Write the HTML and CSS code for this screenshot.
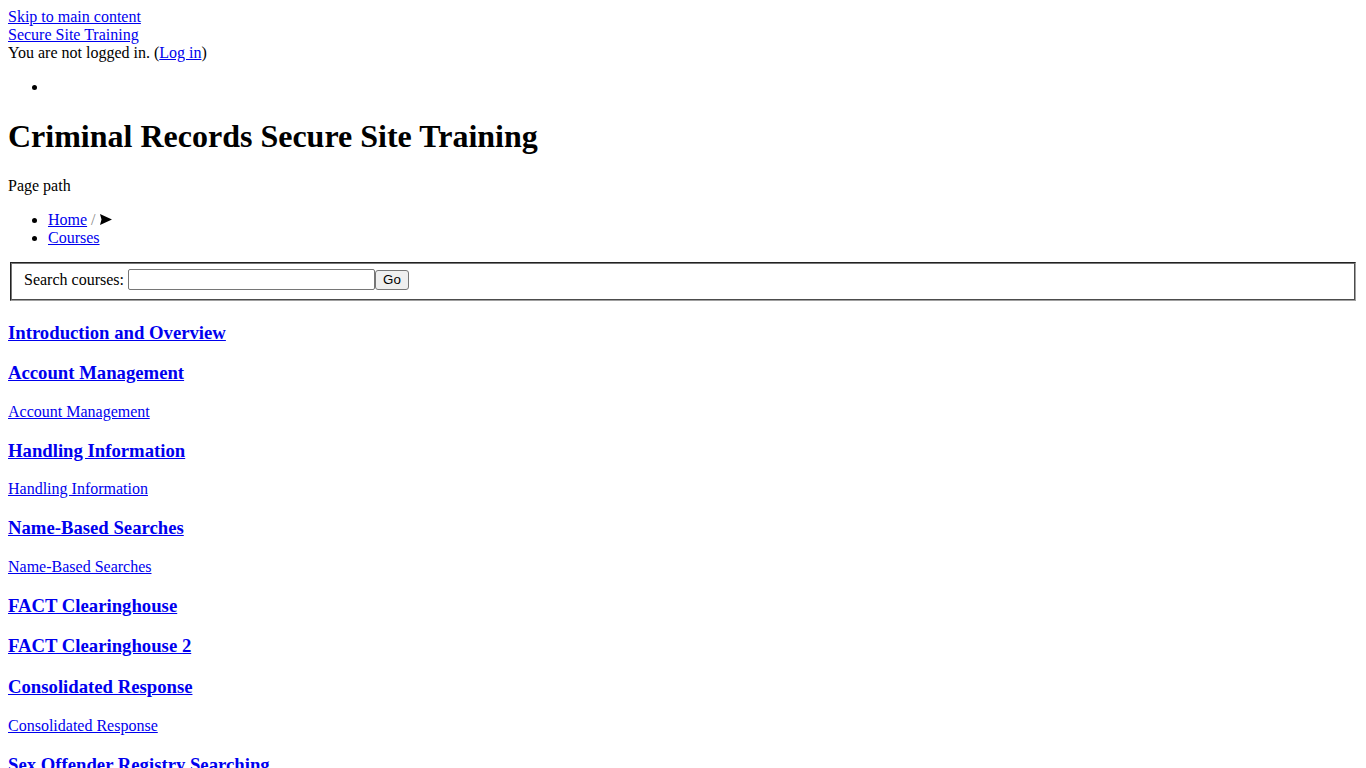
FILE: index.html
```html
<!DOCTYPE html>
<html lang="en">
<head>
<meta charset="utf-8">
<title>Courses</title>
<link rel="stylesheet" href="styles.css">
</head>
<body class="page">
<div class="topbar">
  <a class="link" href="#main">Skip to main content</a><br>
  <a class="link" href="#">Secure Site Training</a><br>
  <span class="login">You are not logged in. (<a class="link" href="#">Log in</a>)</span>
</div>
<ul class="navlist"><li></li></ul>
<h1 class="title">Criminal Records Secure Site Training</h1>
<p class="path">Page path</p>
<ul class="crumbs">
  <li><a class="link" href="#">Home</a> <span class="sep">/</span> <svg class="arrow" width="12" height="11" viewBox="0 0 12 11" aria-hidden="true"><polygon points="0,0 12,5.5 0,11 1.5,5.5" fill="#000"/></svg></li>
  <li><a class="link" href="#">Courses</a></li>
</ul>
<form class="search">
  <fieldset class="searchbox">
    <label class="searchlabel" for="q">Search courses: </label><input id="q" class="searchinput" type="text"><button class="searchbtn" type="button">Go</button>
  </fieldset>
</form>
<div id="main" class="courses">
  <h3 class="course"><a class="link" href="#">Introduction and Overview</a></h3>
  <h3 class="course"><a class="link" href="#">Account Management</a></h3>
  <p class="desc"><a class="link" href="#">Account Management</a></p>
  <h3 class="course"><a class="link" href="#">Handling Information</a></h3>
  <p class="desc"><a class="link" href="#">Handling Information</a></p>
  <h3 class="course"><a class="link" href="#">Name-Based Searches</a></h3>
  <p class="desc"><a class="link" href="#">Name-Based Searches</a></p>
  <h3 class="course"><a class="link" href="#">FACT Clearinghouse</a></h3>
  <h3 class="course"><a class="link" href="#">FACT Clearinghouse 2</a></h3>
  <h3 class="course"><a class="link" href="#">Consolidated Response</a></h3>
  <p class="desc"><a class="link" href="#">Consolidated Response</a></p>
  <h3 class="course"><a class="link" href="#">Sex Offender Registry Searching</a></h3>
  <p class="desc"><a class="link" href="#">Sex Offender Registry Searching</a></p>
</div>
</body>
</html>
```

FILE: styles.css
```css
html { background: #fff; }
.page {
  margin: 8px;
  font-family: "Liberation Serif", "Times New Roman", serif;
  font-size: 16px;
  color: #000;
}
.link { color: #0000ee; text-decoration: underline; }
.topbar { line-height: 18px; }
.navlist { margin: 16px 0; padding-left: 40px; line-height: 18px; }
.title {
  font-size: 32px;
  font-weight: bold;
  margin: 21.44px 0;
  line-height: 38px;
}
.path { margin: 16px 0; line-height: 18px; }
.crumbs { margin: 16px 0 15.5px; padding-left: 40px; line-height: 18px; }
.sep { color: #888; }
.arrow { display: inline-block; vertical-align: 0; }
.search { margin: 0; padding-bottom: 2px; }
.searchbox {
  margin: 0 2px;
  padding: 5px 12px 8.5px;
  border: 2px groove #c0c0c0;
  border-color: #767676 #a0a0a0 #a0a0a0 #767676;
  height: 21px;
  display: flex;
  align-items: center;
}
.searchlabel { line-height: 18px; margin-right: 4px; }
.searchinput {
  width: 247px;
  height: 21px;
  box-sizing: border-box;
  border: 1px solid #767676;
  border-radius: 2px;
  padding: 1px 2px;
  font-family: "Liberation Sans", Arial, sans-serif;
  font-size: 13.33px;
  margin: 0;
}
.searchbtn {
  width: 34px;
  height: 20px;
  box-sizing: border-box;
  border: 1px solid #767676;
  border-radius: 3px;
  background: #efefef;
  font-family: "Liberation Sans", Arial, sans-serif;
  font-size: 13.33px;
  color: #000;
  padding: 0;
  margin: 0;
}
.course {
  font-size: 18.72px;
  font-weight: bold;
  line-height: 22px;
  margin: 18.72px 0;
}
.desc { margin: 16px 0; line-height: 18px; }
```
